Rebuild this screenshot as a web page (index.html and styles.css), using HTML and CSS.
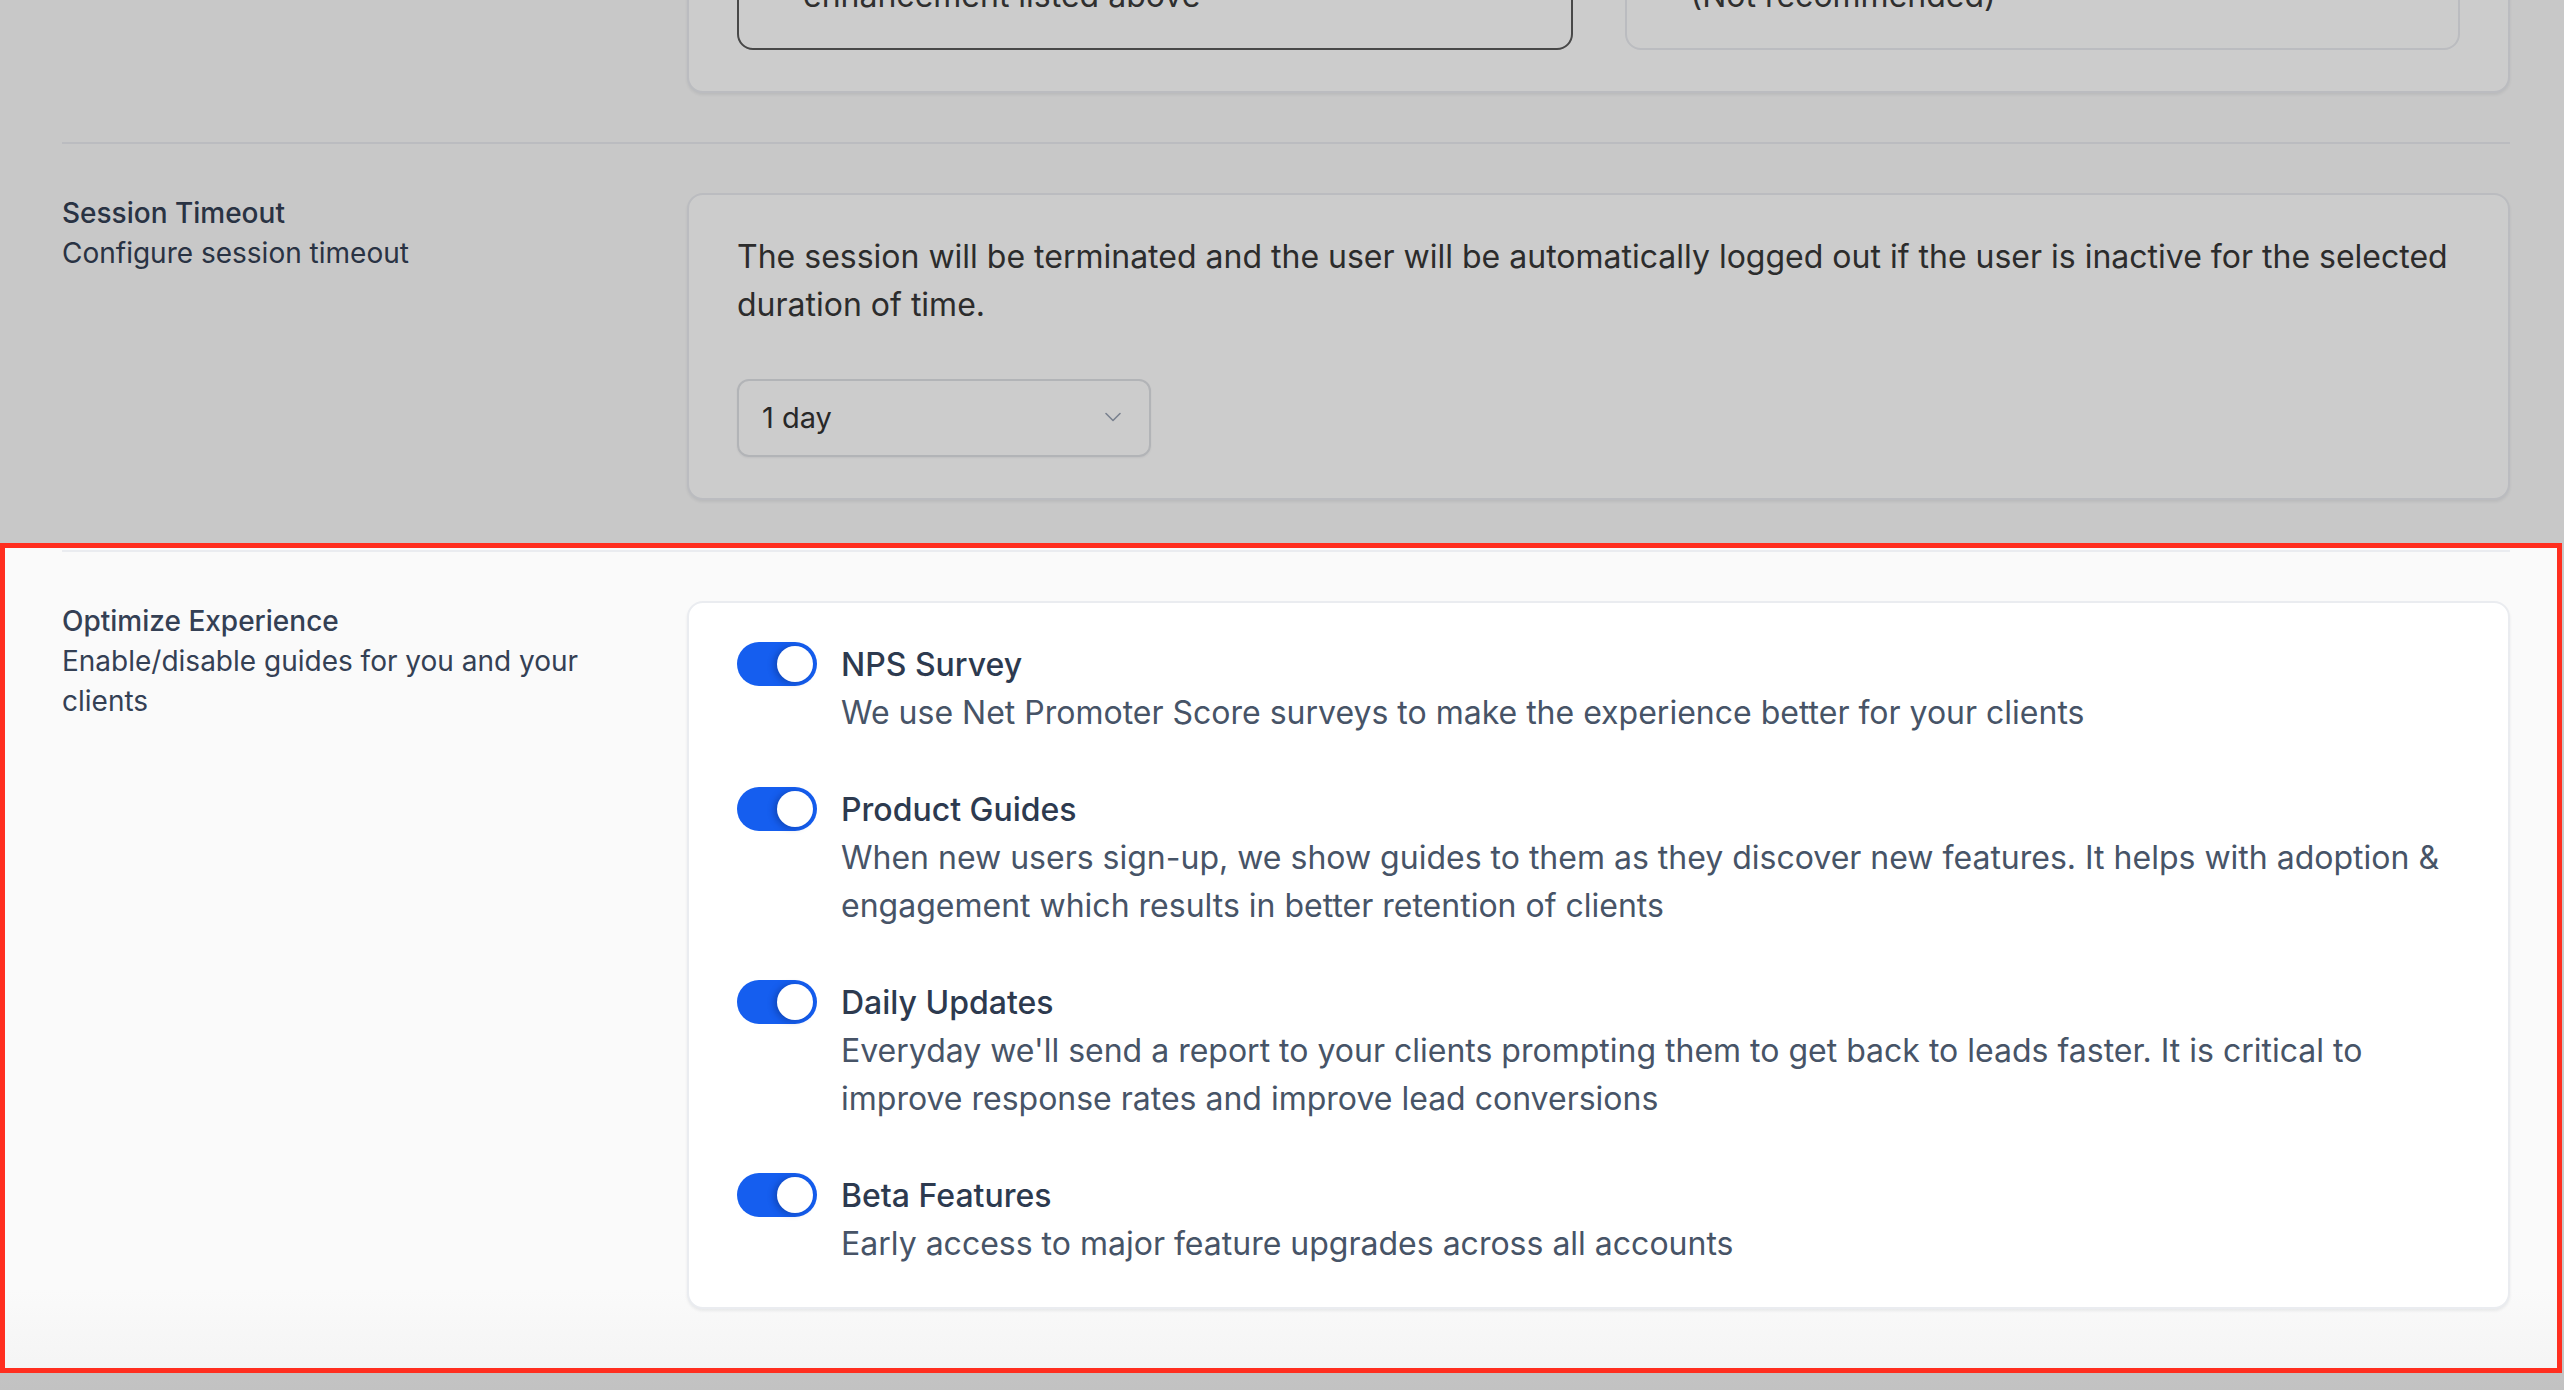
FILE: index.html
```html
<!DOCTYPE html>
<html lang="en">
<head>
<meta charset="utf-8">
<title>Settings</title>
<link rel="stylesheet" href="styles.css">
</head>
<body>
<main class="page">
  <section class="row">
    <div class="label">
      <div class="label-title">Enhancements</div>
      <div class="label-desc">Choose enhancements</div>
    </div>
    <div class="card">
      <div class="options">
        <div class="option selected">
          <p>Opt in to receive every</p>
          <p>enhancement listed above</p>
        </div>
        <div class="option">
          <p>Opt out of all enhancements</p>
          <p>(Not recommended)</p>
        </div>
      </div>
    </div>
  </section>

  <section class="row">
    <div class="label">
      <div class="label-title">Session Timeout</div>
      <div class="label-desc">Configure session timeout</div>
    </div>
    <div class="card">
      <p class="card-text">The session will be terminated and the user will be automatically logged out if the user is inactive for the selected duration of time.</p>
      <div class="select">
        <span>1 day</span>
        <svg class="chevron" width="16" height="10" viewBox="0 0 16 10"><path d="M1 1.5 L8 8.5 L15 1.5" fill="none" stroke="#98a2b3" stroke-width="1.6" stroke-linecap="round" stroke-linejoin="round"/></svg>
      </div>
    </div>
  </section>

  <section class="row highlight">
    <div class="label">
      <div class="label-title">Optimize Experience</div>
      <div class="label-desc">Enable/disable guides for you and your clients</div>
    </div>
    <div class="card toggles">
      <div class="item">
        <span class="toggle"><span class="knob"></span></span>
        <div class="item-text">
          <div class="item-title">NPS Survey</div>
          <div class="item-desc">We use Net Promoter Score surveys to make the experience better for your clients</div>
        </div>
      </div>
      <div class="item">
        <span class="toggle"><span class="knob"></span></span>
        <div class="item-text">
          <div class="item-title">Product Guides</div>
          <div class="item-desc">When new users sign-up, we show guides to them as they discover new features. It helps with adoption &amp; engagement which results in better retention of clients</div>
        </div>
      </div>
      <div class="item">
        <span class="toggle"><span class="knob"></span></span>
        <div class="item-text">
          <div class="item-title">Daily Updates</div>
          <div class="item-desc">Everyday we'll send a report to your clients prompting them to get back to leads faster. It is critical to improve response rates and improve lead conversions</div>
        </div>
      </div>
      <div class="item">
        <span class="toggle"><span class="knob"></span></span>
        <div class="item-text">
          <div class="item-title">Beta Features</div>
          <div class="item-desc">Early access to major feature upgrades across all accounts</div>
        </div>
      </div>
    </div>
  </section>
</main>
</body>
</html>
```

FILE: styles.css
```css
html {
  height: 100%;
  background: linear-gradient(to bottom, #fafafa 0, #fafafa 1290px, #f3f3f3 1390px);
}
body {
  margin: 0;
  min-height: 100%;
  overflow: hidden;
  font-family: Inter, "Noto Sans", "Liberation Sans", sans-serif;
  color: #344054;
}
p { margin: 0; }

.page {
  margin-top: -199px;
  padding: 0 54px 0 62px;
}

.row {
  display: grid;
  grid-template-columns: 625px 1fr;
  padding: 49px 0 50px;
  border-top: 2px solid #eaecf0;
}
.row:first-child {
  border-top: 0;
  padding-bottom: 49px;
}

.label {
  max-width: 560px;
  font-size: 28px;
  line-height: 40px;
  color: #344054;
}
.label-title { font-weight: 500; }

.card {
  background: #fff;
  border: 2px solid #eaecf0;
  border-radius: 16px;
  box-shadow: 0 2px 3px rgba(16, 24, 40, 0.07);
  padding: 38px 48px 41px;
  font-size: 32px;
  line-height: 48px;
}

/* previous (scrolled-off) section */
.options {
  display: grid;
  grid-template-columns: 1fr 1fr;
  gap: 52px;
}
.option {
  box-sizing: border-box;
  height: 160px;
  border: 2px solid #eaecf0;
  border-radius: 16px;
  padding: 32px 30px 0 64px;
  color: #3b3b3b;
}
.option.selected { border-color: #5a5a5a; }

/* session timeout */
.card-text { color: #383838; }
.select {
  margin-top: 50px;
  box-sizing: border-box;
  width: 414px;
  height: 78px;
  border: 2px solid #dfe1e5;
  border-radius: 12px;
  box-shadow: 0 1px 2px rgba(16, 24, 40, 0.06);
  display: flex;
  align-items: center;
  justify-content: space-between;
  padding: 0 28px 0 23px;
  font-size: 29px;
  color: #333;
}
.chevron { margin-top: -2px; }

/* optimize experience */
.toggles {
  display: flex;
  flex-direction: column;
  gap: 49px;
  padding-top: 38px;
  padding-bottom: 39px;
}
.item {
  display: flex;
  align-items: flex-start;
  gap: 24px;
}
.toggle {
  flex: none;
  margin-top: 1px;
  width: 80px;
  height: 44px;
  border-radius: 22px;
  background: #155eef;
  display: flex;
  align-items: center;
  justify-content: flex-end;
  padding: 0 4px;
  box-sizing: border-box;
}
.knob {
  width: 36px;
  height: 36px;
  border-radius: 50%;
  background: #fff;
  box-shadow: -3px 1px 6px rgba(10, 30, 90, 0.35);
}
.item-title {
  font-weight: 500;
  color: #2d3a4f;
}
.item-desc { color: #475467; }

/* spotlight annotation over the highlighted section */
.highlight { position: relative; }
.highlight::after {
  content: "";
  position: absolute;
  top: -9px;
  bottom: -14px;
  left: -62px;
  right: -52px;
  border: 5px solid #ff2e1f;
  box-shadow: 0 0 0 4000px rgba(0, 0, 0, 0.2);
  pointer-events: none;
  z-index: 10;
}
```
